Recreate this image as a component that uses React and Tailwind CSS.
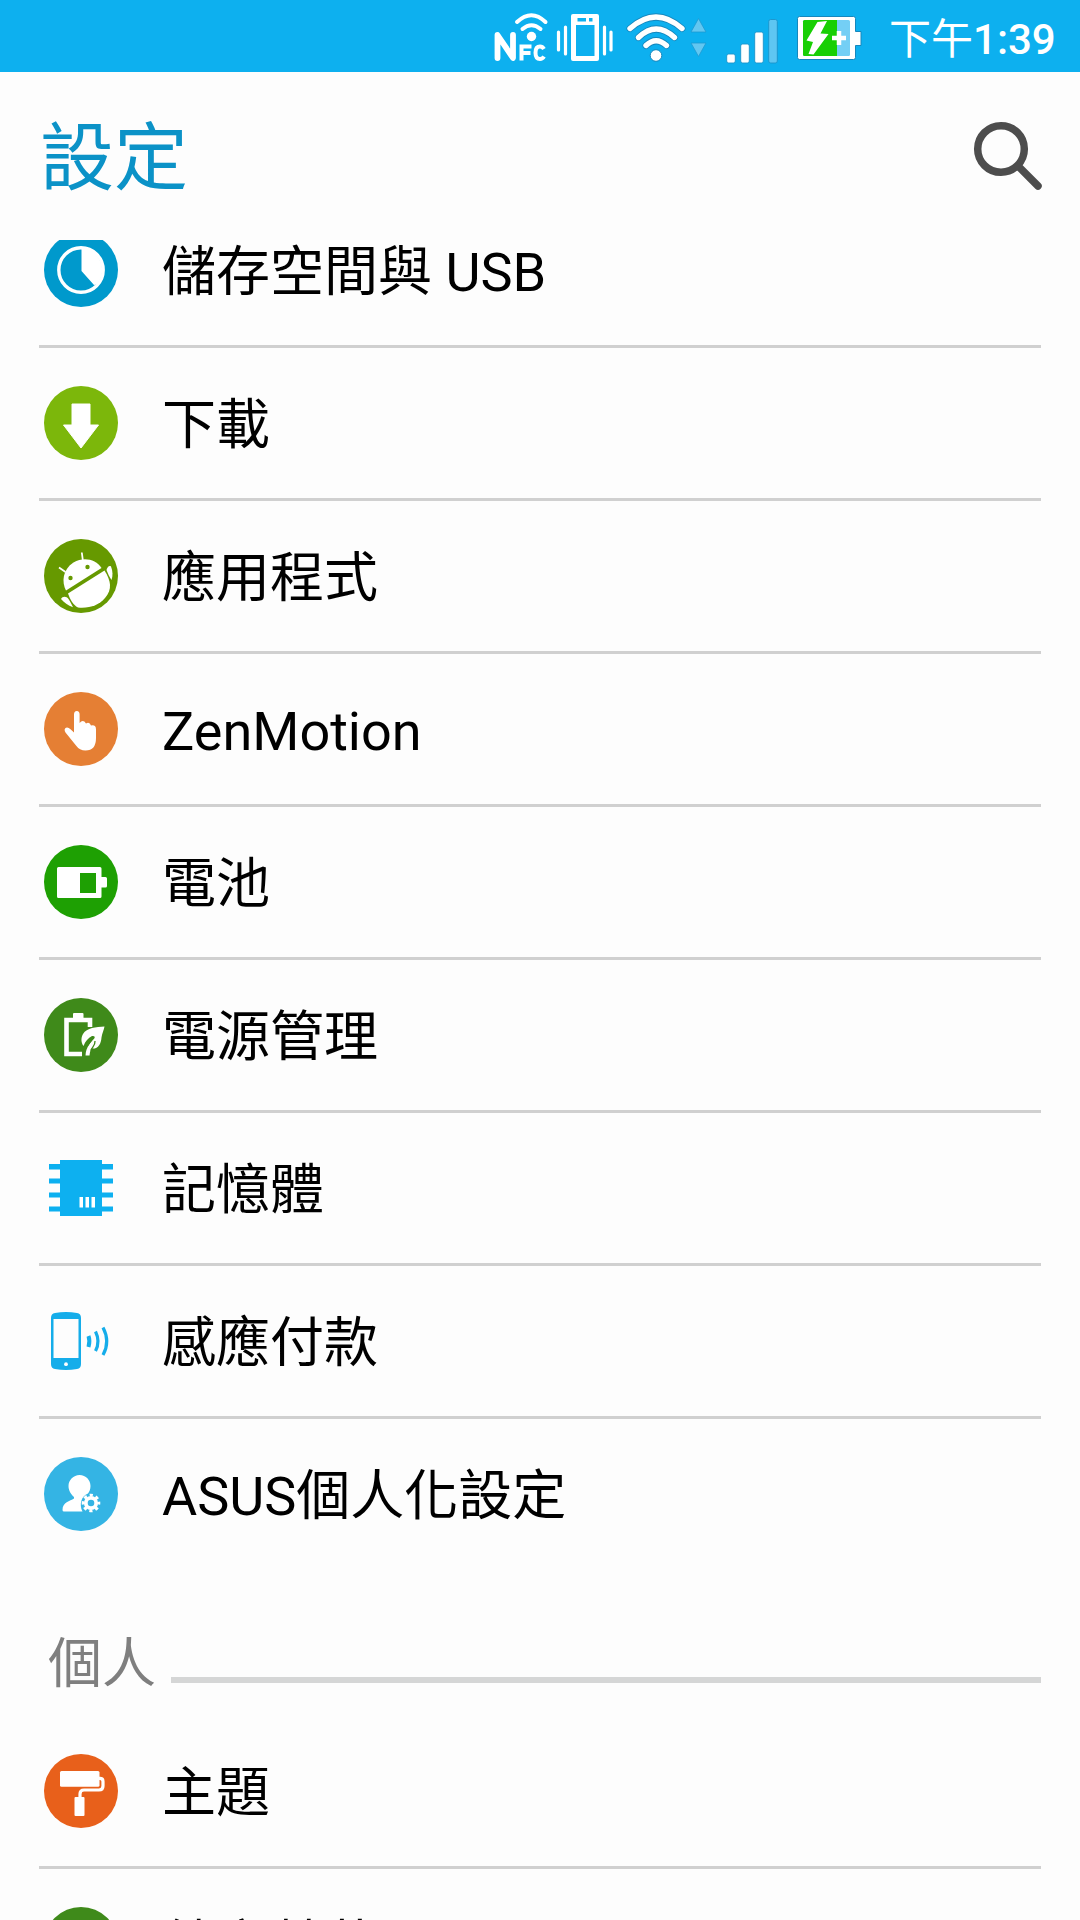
function Disc({ color, children }) {
  return (
    <svg width="74" height="74" viewBox="0 0 74 74" className="block">
      <circle cx="37" cy="37" r="37" fill={color} />
      {children}
    </svg>
  );
}

function StorageIcon() {
  return (
    <Disc color="#0099cc">
      <circle cx="37" cy="37" r="22.2" fill="none" stroke="#fff" strokeWidth="3.4" />
      <path d="M37.500 15.500A21.500 21.500 0 0 1 52.500 51.500L50 52L37.500 38Z" fill="#fff" />
    </Disc>
  );
}

function DownloadIcon() {
  return (
    <Disc color="#7cb70b">
      <path d="M28 18h18v21h8.500L37 62L19.500 39H28Z" fill="#fff" stroke="#fff" strokeWidth="1" strokeLinejoin="round" />
    </Disc>
  );
}

function AndroidIcon() {
  return (
    <Disc color="#669900">
      <g fill="#fff">
        <path d="M22 51.500C17.500 43 18.500 30.500 29.500 23.500C40 17.500 52 20.500 57.500 29Z" />
        <path d="M24 54.500L60.500 31.500C67 42 68.500 50 61 59C55 66 46 69.500 34 68.500C29 66 26 60 24 54.500Z" />
        <path d="M62.500 31C63 28 65.500 26 67 27.500C68.800 32 69 37 67.500 41C65.500 38 64 35 62.500 31Z" />
        <path d="M17 60C18.500 57 22.500 57 24.500 60C26.500 63 28 66 29 68.200C24 66.500 20 63.500 17 60Z" />
      </g>
      <path d="M37.800 13.500L38.800 21M15 28.500L21.500 33" stroke="#fff" strokeWidth="1.8" fill="none" />
      <circle cx="43.500" cy="28" r="2.200" fill="#669900" />
      <circle cx="26.500" cy="39" r="2.200" fill="#669900" />
    </Disc>
  );
}

function TouchIcon() {
  return (
    <Disc color="#e57f34">
      <path
        d="M30 22.500Q30 19 32.800 19Q35.600 19 35.600 22.500V31Q39 27 42 31.500Q45.500 29.500 47 33.500Q52 32.500 52 37.500V46Q52 58.500 41.500 58.500Q35.500 58.500 32 53.500L21.500 40.500Q19.500 37 22 35.700Q24 34.800 26.500 37.200L30 40.500Z"
        fill="#fff"
      />
    </Disc>
  );
}

function BatteryIcon() {
  return (
    <Disc color="#1ea003">
      <path d="M14.500 22H56Q57.500 22 57.500 23.500V32H61.500Q63 32 63 33.500V41Q63 42.500 61.500 42.500H57.500V51.500Q57.500 53 56 53H14.500Q13 53 13 51.500V23.500Q13 22 14.500 22ZM36 28V48H52V28Z" fill="#fff" fillRule="evenodd" />
    </Disc>
  );
}

function PowerIcon() {
  return (
    <Disc color="#3f8a1a">
      <path d="M46 29V22H22.500V56H38" fill="none" stroke="#fff" strokeWidth="4.600" />
      <rect x="29" y="15" width="10.500" height="7" rx="1" fill="#fff" />
      <path d="M60.500 28.500C52 29 43 29.500 39 36C36.800 40 37 44.500 39.500 48C41.500 43 44 40 48 38C50.500 37.500 51.500 39 50 40.500C46.500 44.500 42 49 41.500 57.500H45.500C45.800 55 46.200 52.500 47.500 50.500C54 51.500 57 46 57.500 39.500C58 35 60 32 60.500 28.500Z" fill="#fff" />
      <path d="M43.500 48C45.500 44 48 42 50 39.500M46.800 52.500C48.500 49 51.500 47 51 43" fill="none" stroke="#3f8a1a" strokeWidth="1.300" />
    </Disc>
  );
}

function MemoryIcon() {
  return (
    <svg width="74" height="74" viewBox="0 0 74 74" className="block">
      <path d="M16 9H58V65H16ZM5 13H69V18.500H5ZM5 27.500H69V32.500H5ZM5 41.500H69V46.500H5ZM5 55.500H69V60.500H5Z" fill="#0db0f0" />
      <path d="M35.500 46H39V56.500H35.500ZM41.500 46H45V56.500H41.500ZM47.500 46H51V56.500H47.500Z" fill="#fff" />
    </svg>
  );
}

function PayIcon() {
  return (
    <svg width="74" height="74" viewBox="0 0 74 74" className="block" fill="none">
      <path d="M7 14Q7 9.500 11 9Q22 7 33 9Q37 9.500 37 14V60Q37 64.500 33 65Q22 67 11 65Q7 64.500 7 60ZM9.500 15V54H34.500V15Z" fill="#15adea" fillRule="evenodd" />
      <circle cx="22" cy="60.200" r="1.900" fill="#fff" />
      <path d="M44.500 32Q46.300 37 44.500 43" stroke="#15adea" strokeWidth="4" />
      <path d="M51.500 27.500Q56.500 37.500 51.500 47" stroke="#15adea" strokeWidth="3.200" />
      <path d="M59 23.500Q66.500 37.500 59 51" stroke="#15adea" strokeWidth="3.200" />
    </svg>
  );
}

function PersonalizeIcon() {
  return (
    <Disc color="#34b4e4">
      <path d="M35.500 18C42 18 46.500 23 46.500 29C46.500 32 45.500 34.500 44 36.500C37 39 35 48 38.500 54.500H20Q18.500 54.500 18.500 53C18.500 45 26 44 30 41.500V40C27 37.500 24.500 33.500 24.500 29C24.500 23 29.500 18 35.500 18Z" fill="#fff" />
      <circle cx="47" cy="46" r="7.900" fill="none" stroke="#fff" strokeWidth="2.800" strokeDasharray="3.200 3.005" strokeDashoffset="1.600" />
      <circle cx="47" cy="46" r="5.200" fill="none" stroke="#fff" strokeWidth="3.800" />
    </Disc>
  );
}

function ThemeIcon() {
  return (
    <Disc color="#e8601b">
      <path d="M17.500 17H54Q55.500 17 55.500 18.500V31.200Q55.500 32.700 54 32.700H17.500Q16 32.700 16 31.200V18.500Q16 17 17.500 17Z" fill="#fff" />
      <path d="M55 24.300H56Q59 24.300 59 27.500V32Q59 36 55 36H40Q36 36 36 40V44" fill="none" stroke="#fff" strokeWidth="3.200" />
      <rect x="30.500" y="43" width="10" height="19" rx="1" fill="#fff" />
    </Disc>
  );
}

function StatusIcons() {
  return (
    <svg width="380" height="72" viewBox="484 0 380 72" className="block shrink-0">
      {/* NFC */}
      <path d="M497.500 58V35L513 58V35" fill="none" stroke="#fff" strokeWidth="5.800" strokeLinejoin="round" strokeLinecap="round" />
      <path d="M521.500 60.500V46.500H531.500M521.500 53H530.500M544 49Q542.500 46.500 540 46.500Q535.500 46.500 535.500 52.700Q535.500 59 540 59Q542.500 59 544 56.500" fill="none" stroke="#fff" strokeWidth="4" />
      <circle cx="531.500" cy="36.500" r="4.700" fill="#fff" />
      <path d="M522.500 29Q531.500 21.500 540.500 29M517 22Q531.500 8.500 545.500 22" fill="none" stroke="#fff" strokeWidth="4" strokeLinecap="round" />
      {/* Vibrate */}
      <path d="M573 14H597Q599 14 599 16V59Q599 61 597 61H573Q571 61 571 59V16Q571 14 573 14ZM576 25V56H594.500V25ZM577.500 18V21.500H586V18ZM589 18V21.500H592.500V18Z" fill="#fff" fillRule="evenodd" />
      <path d="M558.500 32V50M565.500 27V54M604.500 27V54M611 32V50" stroke="#fff" strokeWidth="3.200" strokeLinecap="round" />
      {/* Wi-Fi */}
      <g fill="none" strokeLinecap="round">
        <path d="M630 28.500Q656 5.500 682 28.500M638.500 37.500Q656 20.500 674.500 37.500M646 45.500Q656 36 666.500 45.500" stroke="#1687bd" strokeWidth="7" />
        <path d="M630 28.500Q656 5.500 682 28.500M638.500 37.500Q656 20.500 674.500 37.500M646 45.500Q656 36 666.500 45.500" stroke="#fff" strokeWidth="5.400" />
      </g>
      <circle cx="656" cy="55.500" r="5.800" fill="#fff" stroke="#1687bd" />
      <path d="M698.500 18.500L706 32H691ZM698.500 56.500L706 43H691Z" fill="#62c7f1" stroke="#1d99d2" strokeWidth="0.800" strokeLinejoin="round" />
      {/* Signal */}
      <g fill="#fff" stroke="#1b93ca" strokeWidth="0.900">
        <rect x="726.700" y="54" width="8.600" height="9" rx="2" />
        <rect x="740.700" y="44" width="8.600" height="19" rx="2" />
        <rect x="754.700" y="32" width="8.600" height="31" rx="2" />
        <rect x="768.700" y="19.500" width="8.600" height="43.500" rx="2" fill="#5ec6f2" />
      </g>
      {/* Battery */}
      <path d="M799.500 16.500H853.500Q855.500 16.500 855.500 18.500V31.500H861V45.500H855.500V57.500Q855.500 59.500 853.500 59.500H799.500Q797.500 59.500 797.500 57.500V18.500Q797.500 16.500 799.500 16.500Z" fill="#fff" stroke="#1687bd" />
      <rect x="803" y="20" width="47" height="36" rx="1.500" fill="#74cff5" />
      <path d="M804.500 20H837V56H804.500Q803 56 803 54.500V21.500Q803 20 804.500 20Z" fill="#18cf04" />
      <path d="M817.500 22L827 21L820.500 33.500L828.500 34L813.500 54.500L808.500 54L813 42L806.500 40.500Z" fill="#fff" />
      <path d="M832 38H846M839 31V45" stroke="#fff" strokeWidth="4.500" />
    </svg>
  );
}

function Row({ icon, label, divider = true }) {
  return (
    <li className={divider ? "flex h-[153px] shrink-0 items-center border-b-3 border-[#d0d0d0] pl-[5px]" : "flex h-[150px] shrink-0 items-center pl-[5px]"}>
      <span className="w-[118px] shrink-0">{icon}</span>
      <span className="whitespace-nowrap pt-[5px] text-[54px] leading-[72px] text-black">{label}</span>
    </li>
  );
}

const device = [
  ["儲存空間與 USB", StorageIcon],
  ["下載", DownloadIcon],
  ["應用程式", AndroidIcon],
  ["ZenMotion", TouchIcon],
  ["電池", BatteryIcon],
  ["電源管理", PowerIcon],
  ["記憶體", MemoryIcon],
  ["感應付款", PayIcon],
  ["ASUS個人化設定", PersonalizeIcon],
];

export default function App() {
  return (
    <div lang="zh-Hant" className="flex h-[1920px] w-[1080px] flex-col overflow-hidden bg-[#fdfdfd] font-['Roboto','Noto_Sans_CJK_TC',sans-serif]">
      <header className="flex h-[72px] shrink-0 items-center justify-end bg-[#0db0ef] pr-[25px] text-white">
        <StatusIcons />
        <span className="ml-[25px] w-[166px] whitespace-nowrap pt-[7px] text-right text-[42px] leading-[72px]">
          <span className="font-normal">下午</span>
          <span className="font-medium">1:39</span>
        </span>
      </header>
      <div className="flex h-[168px] shrink-0 items-center justify-between pr-[38px] pl-[40px]">
        <h1 className="pt-[5px] text-[74px] leading-[96px] text-[#0b92c7]">設定</h1>
        <svg width="70" height="70" viewBox="972 121 70 70" className="block" fill="none" stroke="#4d4d4d">
          <circle cx="1001" cy="149" r="23.300" strokeWidth="7.500" />
          <path d="M1018.500 166.500L1038 186" strokeWidth="7.500" strokeLinecap="round" />
        </svg>
      </div>
      <main className="flex min-h-0 flex-1 flex-col justify-start overflow-hidden px-[39px]">
        <ul className="-mt-[45px] shrink-0">
          {device.map(([label, Icon], i) => (
            <Row key={label} icon={<Icon />} label={label} divider={i < device.length - 1} />
          ))}
        </ul>
        <div className="flex h-[147px] shrink-0 items-center pl-[9px]">
          <h2 className="w-[123px] shrink-0 pt-[45px] text-[54px] leading-[72px] text-[#7f7f7f]">個人</h2>
          <div className="mt-[74px] h-[6px] flex-1 bg-[#d5d6d6]" />
        </div>
        <ul className="shrink-0">
          <Row icon={<ThemeIcon />} label="主題" />
          <Row icon={<Disc color="#3f8a1a" />} label="鎖定螢幕" divider={false} />
        </ul>
      </main>
    </div>
  );
}
